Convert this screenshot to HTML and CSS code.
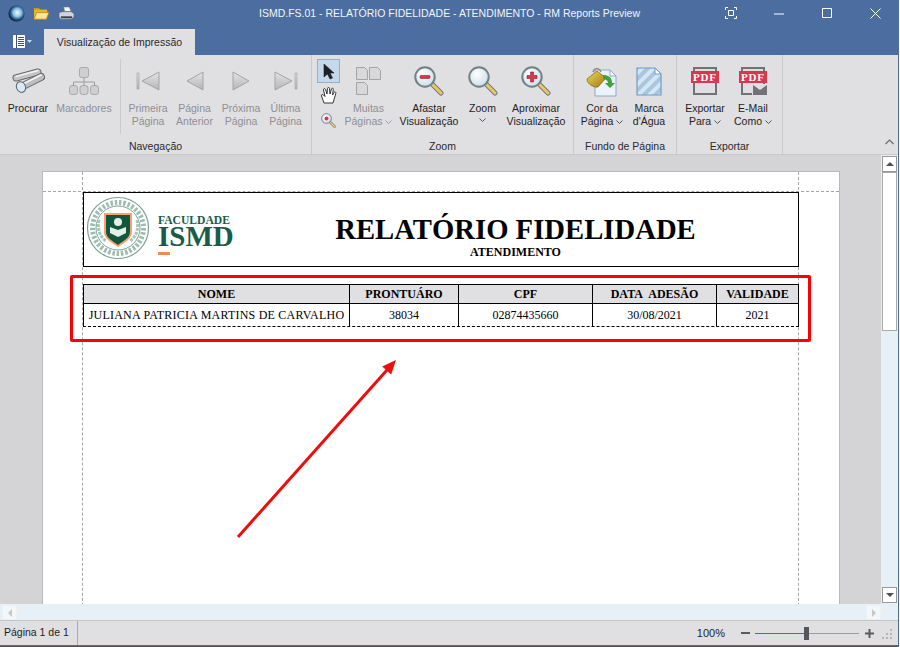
FILE: index.html
```html
<!DOCTYPE html>
<html lang="pt">
<head>
<meta charset="utf-8">
<title>RM Reports Preview</title>
<link rel="stylesheet" href="styles.css">
</head>
<body>
<svg class="defs" width="0" height="0" aria-hidden="true">
  <defs>
    <linearGradient id="navg" x1="0" y1="0" x2="0" y2="1"><stop offset="0" stop-color="#e4e4e6"/><stop offset="1" stop-color="#b4b4b8"/></linearGradient>
    <radialGradient id="lens" cx=".4" cy=".35" r=".8"><stop offset="0" stop-color="#ffffff"/><stop offset=".7" stop-color="#d5e4ea"/><stop offset="1" stop-color="#a9bfc8"/></radialGradient>
    <radialGradient id="globe" cx=".55" cy=".45" r=".55"><stop offset="0" stop-color="#f2f8fb"/><stop offset=".45" stop-color="#8ec6e4"/><stop offset=".8" stop-color="#1f4a78"/><stop offset="1" stop-color="#0d1f38"/></radialGradient>
    <linearGradient id="bucket" x1="0" y1="0" x2="1" y2="1"><stop offset="0" stop-color="#f2d65a"/><stop offset="1" stop-color="#9c7a10"/></linearGradient>
    <symbol id="mag" viewBox="0 0 30 30">
      <path d="M16 16l11 11" stroke="#77777a" stroke-width="5" stroke-linecap="round"/>
      <path d="M18 18l9 9" stroke="#e8c766" stroke-width="3" stroke-linecap="round"/>
      <circle cx="11" cy="11" r="9.700" fill="url(#lens)" stroke="#6f8288" stroke-width="2"/>
    </symbol>
    <symbol id="pages" viewBox="0 0 26 28">
      <path d="M.5.500h8l3 3v9H.5zM13.500.500h8l3 3v9h-11zM.5 15.500h8l3 3v9H.5z" fill="#d8d7da" stroke="#a3a3a6"/>
    </symbol>
    <symbol id="pdf" viewBox="0 0 28 28">
      <path d="M3 1h22v26H3z" fill="none" stroke="#727275" stroke-width="2"/>
      <path d="M0 4h28v12H0z" fill="#d9364f"/>
    </symbol>
  </defs>
</svg>
<div class="window">
  <header class="titlebar">
    <div class="qat">
      <svg width="17" height="17" viewBox="0 0 18 18"><circle cx="9" cy="9" r="8.500" fill="url(#globe)"/></svg>
      <svg width="17" height="15" viewBox="0 0 18 16"><path d="M1 2h5l2 2h7v3H1z" fill="#c99a1f"/><path d="M1 14V4h14v10z" fill="#e8b52f"/><path d="M1 14l3-7h13l-3 7z" fill="#fce690" stroke="#b6861a" stroke-width=".8"/></svg>
      <svg width="17" height="15" viewBox="0 0 18 16"><path d="M6 1h6l2 5H7z" fill="#f4f4f4" stroke="#6f7c8c" stroke-width=".7"/><path d="M1 7l4-1h9l3 2v4l-3 2H3l-2-2z" fill="#cfd5dc" stroke="#5d6570" stroke-width=".7"/><path d="M3 11h12v2H3z" fill="#39414c"/></svg>
    </div>
    <div class="wintitle">ISMD.FS.01 - RELATÓRIO FIDELIDADE - ATENDIMENTO - RM Reports Preview</div>
    <div class="winbtns">
      <svg width="12" height="12" viewBox="0 0 12 12" fill="none" stroke="#fff"><path d="M.5 3V.5H3M9 .5h2.500V3M11.500 9v2.500H9M3 11.500H.5V9"/><path d="M3.500 3.500h5v5h-5z"/></svg>
      <svg width="11" height="11" viewBox="0 0 11 11" fill="none" stroke="#fff"><path d="M0 6h10"/></svg>
      <svg width="11" height="11" viewBox="0 0 11 11" fill="none" stroke="#fff"><path d="M.5.500h9v9h-9z"/></svg>
      <svg width="11" height="11" viewBox="0 0 11 11" fill="none" stroke="#fff"><path d="M.5.500l10 10M10.500.500l-10 10"/></svg>
    </div>
  </header>
  <div class="tabrow">
    <button class="appmenu" type="button">
      <svg width="12" height="13" viewBox="0 0 12 13"><path d="M.5.500h11v12H.5z" fill="#fff" stroke="#fff"/><path d="M3.500 0v13" stroke="#44536a"/><path d="M5 2.500h6M5 4.500h6M5 6.500h6M5 8.500h6M5 10.500h6" stroke="#44536a"/></svg>
      <svg width="5" height="3" viewBox="0 0 5 3"><path d="M0 0h5L2.500 3z" fill="#cfd8e6"/></svg>
    </button>
    <div class="tab">Visualização de Impressão</div>
  </div>
  <section class="ribbon">
    <div class="group g-nav">
      <div class="tools">
        <div class="rb w-proc">
          <svg class="ico" width="34" height="26" viewBox="0 0 34 26"><g fill="none" stroke-linecap="round"><path d="M5 10L27 4" stroke="#68686b" stroke-width="7"/><path d="M5 10L27 4" stroke="#c4c4c6" stroke-width="5"/><path d="M5 8.500L27 2.500" stroke="#f2f2f2" stroke-width="1.400"/><path d="M10 19L30 9" stroke="#68686b" stroke-width="8"/><path d="M10 19L30 9" stroke="#bdbdc0" stroke-width="6"/><path d="M10 17L30 7" stroke="#f4f4f4" stroke-width="1.600"/></g><ellipse cx="10" cy="19" rx="4.500" ry="5.500" fill="#d8e9f7" stroke="#59626e" transform="rotate(-25 10 19)"/></svg>
          <span class="lbl">Procurar</span>
        </div>
        <div class="rb w-proc off">
          <svg class="ico" width="30" height="28" viewBox="0 0 30 28"><g fill="#cfced1" stroke="#a9a9ac"><rect x="10.500" y=".5" width="9" height="10" rx="2"/><rect x=".5" y="18.500" width="8" height="9" rx="2.500"/><rect x="11" y="18.500" width="8" height="9" rx="2.500"/><rect x="21.500" y="18.500" width="8" height="9" rx="2.500"/></g><path d="M15 11v7.500M4.500 18.500V15h21v3.500" fill="none" stroke="#9c9c9f"/></svg>
          <span class="lbl">Marcadores</span>
        </div>
      </div>
      <div class="vsep"></div>
      <div class="tools">
        <div class="rb w-a off">
          <svg class="ico" width="24" height="20" viewBox="0 0 24 20"><path d="M1 2h2v16H1z" fill="url(#navg)" stroke="#a5a5a8" stroke-width=".7"/><path d="M23 1v18L6 10z" fill="url(#navg)" stroke="#a5a5a8"/></svg>
          <span class="lbl">Primeira<br>Página</span>
        </div>
        <div class="rb w-b off">
          <svg class="ico" width="18" height="20" viewBox="0 0 18 20"><path d="M17 1v18L1 10z" fill="url(#navg)" stroke="#a5a5a8"/></svg>
          <span class="lbl">Página<br>Anterior</span>
        </div>
        <div class="rb w-a off">
          <svg class="ico" width="18" height="20" viewBox="0 0 18 20"><path d="M1 1v18l16-9z" fill="url(#navg)" stroke="#a5a5a8"/></svg>
          <span class="lbl">Próxima<br>Página</span>
        </div>
        <div class="rb w-c off">
          <svg class="ico" width="24" height="20" viewBox="0 0 24 20"><path d="M1 1v18l17-9z" fill="url(#navg)" stroke="#a5a5a8"/><path d="M21 2h2v16h-2z" fill="url(#navg)" stroke="#a5a5a8" stroke-width=".7"/></svg>
          <span class="lbl">Última<br>Página</span>
        </div>
      </div>
      <div class="gname">Navegação</div>
    </div>
    <div class="group g-zoom">
      <div class="tools">
        <div class="smalltools">
          <div class="st active"><svg width="14" height="17" viewBox="0 0 14 17"><path d="M2 1v13l3.500-3 2.500 5 2.500-1-2.500-5H12z" fill="#1d2024" stroke="#1d2024" stroke-width=".6"/></svg></div>
          <div class="st"><svg width="17" height="17" viewBox="0 0 17 17"><path d="M4 16L1.500 9c-.5-1.500 1-2 2-1L5 9.500 3.500 3c-.3-1.500 1.500-2 2-.5L7 7 7.500 1.500c.1-1.500 2-1.500 2 0L10 7l1.500-5c.4-1.300 2-1 1.800.5L12.500 8l1.500-2.500c.8-1.200 2.300-.5 1.800.8L13 16z" fill="#fff" stroke="#222" stroke-width=".9"/></svg></div>
          <div class="st"><svg width="15" height="15" viewBox="0 0 30 30"><use href="#mag"/><circle cx="11" cy="11" r="4" fill="#d9364f"/></svg></div>
        </div>
        <div class="rb w-mp off">
          <svg class="ico" width="26" height="28" viewBox="0 0 26 28"><use href="#pages"/></svg>
          <span class="lbl">Muitas<br>Páginas<svg class="chev" width="7" height="4" viewBox="0 0 7 4"><path d="M.5.500l3 3 3-3" fill="none" stroke="#9d9da0"/></svg></span>
        </div>
        <div class="rb w-af">
          <svg class="ico" width="30" height="30" viewBox="0 0 30 30"><use href="#mag"/><rect x="6" y="9.500" width="10" height="3" rx="1" fill="#d9364f" stroke="#8d2030" stroke-width=".6"/></svg>
          <span class="lbl">Afastar<br>Visualização</span>
        </div>
        <div class="rb w-z">
          <svg class="ico" width="30" height="30" viewBox="0 0 30 30"><use href="#mag"/></svg>
          <span class="lbl">Zoom<br><svg class="chev solo" width="7" height="4" viewBox="0 0 7 4"><path d="M.5.500l3 3 3-3" fill="none" stroke="#55555a"/></svg></span>
        </div>
        <div class="rb w-ap">
          <svg class="ico" width="30" height="30" viewBox="0 0 30 30"><use href="#mag"/><path d="M9.500 6h3v3.500H16v3h-3.500V16h-3v-3.500H6v-3h3.500z" fill="#d9364f" stroke="#8d2030" stroke-width=".6"/></svg>
          <span class="lbl">Aproximar<br>Visualização</span>
        </div>
      </div>
      <div class="gname">Zoom</div>
    </div>
    <div class="group g-bg">
      <div class="tools">
        <div class="rb w-cor">
          <svg class="ico" width="32" height="32" viewBox="0 0 32 32"><path d="M9 5h15l6 6v20H9z" fill="#e9f3f9" stroke="#8fa9c4"/><path d="M24 5v6h6z" fill="#fff" stroke="#8fa9c4"/><path d="M1 14L11 6l9 7-8 9c-4 1-11-3-11-8z" fill="url(#bucket)" stroke="#7d6208" stroke-width=".7"/><path d="M7 7c1-4 6-5 8 0" fill="none" stroke="#8a8a8a" stroke-width="1.400"/><path d="M17 10c5 0 9 2 9 8h3l-5 5-5-5h3c0-3-3-4-5-4z" fill="#3fa33a"/></svg>
          <span class="lbl">Cor da<br>Página<svg class="chev" width="7" height="4" viewBox="0 0 7 4"><path d="M.5.500l3 3 3-3" fill="none" stroke="#55555a"/></svg></span>
        </div>
        <div class="rb w-marca">
          <svg class="ico" width="26" height="30" viewBox="0 0 26 30"><defs><pattern id="wm" width="8" height="8" patternUnits="userSpaceOnUse" patternTransform="rotate(45)"><rect width="8" height="8" fill="#d5e6f3"/><rect width="4" height="8" fill="#a9c6de"/></pattern></defs><path d="M1 2h18l6 6v21H1z" fill="url(#wm)" stroke="#6f9cc9" stroke-width="1.200"/><path d="M19 2v6h6z" fill="#fff" stroke="#6f9cc9"/></svg>
          <span class="lbl">Marca<br>d'Água</span>
        </div>
      </div>
      <div class="gname">Fundo de Página</div>
    </div>
    <div class="group g-exp">
      <div class="tools">
        <div class="rb w-ex">
          <svg class="ico" width="28" height="28" viewBox="0 0 28 28"><use href="#pdf"/><text class="pdf" x="14" y="14" text-anchor="middle">PDF</text></svg>
          <span class="lbl">Exportar<br>Para<svg class="chev" width="7" height="4" viewBox="0 0 7 4"><path d="M.5.500l3 3 3-3" fill="none" stroke="#55555a"/></svg></span>
        </div>
        <div class="rb w-em">
          <svg class="ico" width="28" height="28" viewBox="0 0 28 28"><use href="#pdf"/><text class="pdf" x="14" y="14" text-anchor="middle">PDF</text><path d="M13 17h15v11H13z" fill="#e0dfe2"/><path d="M14 18h14v10H14z" fill="#737377"/><path d="M14 18l7 5 7-5z" fill="#e0dfe2"/></svg>
          <span class="lbl">E-Mail<br>Como<svg class="chev" width="7" height="4" viewBox="0 0 7 4"><path d="M.5.500l3 3 3-3" fill="none" stroke="#55555a"/></svg></span>
        </div>
      </div>
      <div class="gname">Exportar</div>
    </div>
    <svg class="collapse" width="9" height="6" viewBox="0 0 9 6"><path d="M.5 5L4.500 1l4 4" fill="none" stroke="#6a6a6e" stroke-width="1.200"/></svg>
  </section>
  <div class="viewer">
    <div class="canvas">
      <div class="paper">
        <div class="guide-h"></div>
        <div class="guide-v gv-l"></div>
        <div class="guide-v gv-r"></div>
        <div class="report">
          <div class="rephead">
            <div class="logo">
              <svg width="64" height="64" viewBox="0 0 64 64">
                <circle cx="32" cy="32" r="30.500" fill="#fff" stroke="#7aa394" stroke-width="1.200"/>
                <circle cx="32" cy="32" r="25.500" fill="none" stroke="#9dbcaf" stroke-width="5" stroke-dasharray="2.500 1.800"/>
                <circle cx="32" cy="32" r="22" fill="#fff" stroke="#7aa394"/>
                <path d="M13 24c-2 9 1 17 7 21M51 24c2 9-1 17-7 21" fill="none" stroke="#a9c4b9" stroke-width="3" stroke-dasharray="3 1"/>
                <path d="M18 17h28v19c0 7-8 11-14 15-6-4-14-8-14-15z" fill="#f3a56b"/>
                <path d="M20 19h24v17c0 6-7 9-12 13-5-4-12-7-12-13z" fill="#13573f"/>
                <path d="M24 31l8 3 8-3v6l-8 4-8-4z" fill="#e4efe9"/>
                <circle cx="32" cy="26" r="4" fill="#e4efe9"/>
              </svg>
              <div class="wordmark">
                <div class="wm-small">FACULDADE</div>
                <div class="wm-big">ISMD</div>
                <div class="wm-bar"></div>
              </div>
            </div>
            <div class="reptitle">
              <div class="t1">RELATÓRIO FIDELIDADE</div>
              <div class="t2">ATENDIMENTO</div>
            </div>
          </div>
          <div class="reptable">
            <div class="rr hd">
              <div class="c c1">NOME</div><div class="c c2">PRONTUÁRO</div><div class="c c3">CPF</div><div class="c c4">DATA&nbsp; ADESÃO</div><div class="c c5">VALIDADE</div>
            </div>
            <div class="rr bd">
              <div class="c c1 name">JULIANA PATRICIA MARTINS DE CARVALHO</div><div class="c c2">38034</div><div class="c c3">02874435660</div><div class="c c4">30/08/2021</div><div class="c c5">2021</div>
            </div>
          </div>
        </div>
      </div>
      <div class="redbox"></div>
      <svg class="arrow" width="170" height="190" viewBox="0 0 170 190"><path d="M3 182L152 15" stroke="#ee0d0d" stroke-width="3" fill="none"/><path d="M161 5l-4.800 14.400-9-8z" fill="#ee0d0d"/></svg>
    </div>
    <div class="vscroll">
      <div class="sbtn"><svg width="8" height="4" viewBox="0 0 8 4"><path d="M4 0l4 4H0z" fill="#4f4f52"/></svg></div>
      <div class="thumb"></div>
      <div class="strack"></div>
      <div class="sbtn"><svg width="8" height="4" viewBox="0 0 8 4"><path d="M0 0h8L4 4z" fill="#4f4f52"/></svg></div>
    </div>
  </div>
  <div class="hscroll">
    <div class="hbtn"><svg width="4" height="8" viewBox="0 0 4 8"><path d="M4 0v8L0 4z" fill="#c4c6c8"/></svg></div>
    <div class="hbtn"><svg width="4" height="8" viewBox="0 0 4 8"><path d="M0 0v8l4-4z" fill="#c4c6c8"/></svg></div>
  </div>
  <footer class="status">
    <div class="pageinfo">Página 1 de 1</div>
    <div class="zoomarea">
      <span class="pct">100%</span>
      <svg width="9" height="3" viewBox="0 0 9 3"><path d="M0 0h9v2H0z" fill="#5b5b5e"/></svg>
      <div class="slider"><div class="fill"></div><div class="knob"></div></div>
      <svg width="9" height="9" viewBox="0 0 9 9"><path d="M3.500 0h2v3.500H9v2H5.500V9h-2V5.500H0v-2h3.500z" fill="#5b5b5e"/></svg>
      <svg class="grip" width="11" height="11" viewBox="0 0 11 11"><path d="M8 0h2v2H8zM4 4h2v2H4zM8 4h2v2H8zM0 8h2v2H0zM4 8h2v2H4zM8 8h2v2H8z" fill="#b5b5b8"/></svg>
    </div>
  </footer>
</div>
</body>
</html>
```
FILE: styles.css
```css
* { box-sizing: border-box; }
html, body { margin: 0; padding: 0; }
body { width: 900px; height: 647px; overflow: hidden; background: #fff; font-family: "Liberation Sans", "Noto Sans", sans-serif; font-size: 10.500px; color: #1e1e1e; }
.defs { position: absolute; }
.window { width: 899px; height: 647px; display: flex; flex-direction: column; border-right: 1px solid #4c6d9f; border-bottom: 1px solid #555; }

.titlebar { height: 28px; padding-bottom: 2px; background: #4c6d9f; display: flex; align-items: center; color: #fff; flex: none; }
.qat { display: flex; align-items: center; gap: 8px; width: 78px; padding-left: 8px; flex: none; }
.wintitle { width: 633px; padding-left: 181px; white-space: nowrap; color: #f2f5f9; flex: none; }
.winbtns { display: flex; align-items: center; gap: 37px; padding-left: 14px; }

.tabrow { height: 27px; background: #4c6d9f; display: flex; flex: none; }
.appmenu { width: 44px; height: 27px; padding: 0 0 0 13px; background: none; border: 0; display: flex; align-items: center; gap: 2px; }
.tab { width: 151px; height: 26px; margin-top: 1px; background: #e0dfe2; text-align: center; line-height: 26px; color: #2a2a2a; }

.ribbon { height: 100px; background: #e0dfe2; display: flex; border-bottom: 1px solid #c9c8cb; position: relative; flex: none; }
.group { position: relative; border-right: 1px solid #c9c8cb; display: flex; flex: none; height: 99px; }
.g-nav { width: 312px; }
.g-zoom { width: 262px; }
.g-bg { width: 103px; padding-left: 1px; }
.g-exp { width: 106px; }
.tools { display: flex; height: 80px; padding-top: 3px; }
.vsep { width: 1px; height: 75px; margin: 4px 4px 0 8px; background: #cbcacd; flex: none; }
.gname { position: absolute; left: 0; right: 0; bottom: 1px; text-align: center; line-height: 14px; color: #2a2a2a; }
.rb { display: flex; flex-direction: column; align-items: center; flex: none; text-align: center; line-height: 13px; color: #1e1e1e; height: 77px; }
.rb .ico { height: 32px; margin-top: 7px; margin-bottom: 5px; flex: none; }
.lbl { display: block; white-space: nowrap; }
.rb.off { color: #8f8f92; }
.chev { margin-left: 3px; vertical-align: 1px; }
.chev.solo { margin: 0; vertical-align: 3px; }
.w-proc { width: 56px; }
.w-a { width: 46px; }
.w-b { width: 47px; }
.w-c { width: 43px; }
.smalltools { width: 34px; padding-left: 5px; padding-top: 1px; display: flex; flex-direction: column; flex: none; }
.st { width: 23px; height: 24px; display: flex; align-items: center; justify-content: center; }
.st.active { background: #c6d9ea; border: 1px solid #8fb0cf; }
.st:nth-child(3) { margin-top: 1px; }
.w-mp { width: 45px; }
.w-af { width: 76px; }
.w-z { width: 31px; }
.w-ap { width: 76px; }
.w-cor { width: 54px; }
.w-marca { width: 40px; }
.w-ex { width: 56px; }
.w-em { width: 40px; }
.pdf { font-family: "Liberation Serif", serif; font-size: 11px; font-weight: 700; fill: #fff; letter-spacing: .8px; }
.collapse { position: absolute; left: 885px; top: 84px; }

.viewer { flex: 1; min-height: 0; display: flex; background: #d4d3d6; }
.canvas { flex: 1; min-width: 0; position: relative; overflow: hidden; padding: 16px 0 0 42px; }
.paper { position: relative; width: 798px; height: 500px; background: #fff; border: 1px solid #b9b8bb; border-bottom: 0; padding: 20px 0 0 40px; }
.guide-h { position: absolute; left: 0; right: 0; top: 19px; border-top: 1px dashed #a5a5a5; }
.guide-v { position: absolute; top: 0; bottom: 0; border-left: 1px dashed #a5a5a5; }
.gv-l { left: 39px; }
.gv-r { left: 755px; }
.report { width: 716px; position: relative; font-family: "Liberation Serif", serif; color: #000; }
.rephead { height: 75px; border: 1px solid #000; display: flex; position: relative; background: #fff; }
.logo { width: 149px; flex: none; display: flex; align-items: flex-start; gap: 8px; padding: 3px 0 0 2px; }
.logo svg { flex: none; }
.wordmark { color: #1a5c47; font-weight: 700; margin-top: 18px; }
.wm-small { font-size: 11.600px; line-height: 13px; white-space: nowrap; }
.wm-big { font-size: 29px; line-height: 25px; margin-top: -3px; }
.wm-bar { width: 12px; height: 3px; margin-top: 3px; background: #f08c4b; }
.reptitle { flex: 1; text-align: center; font-weight: 700; padding-top: 21px; }
.t1 { font-size: 28.700px; line-height: 30px; white-space: nowrap; }
.t2 { font-size: 12px; line-height: 13px; margin-top: 2px; }
.reptable { margin-top: 17px; }
.rr { display: flex; }
.rr.hd { height: 20px; border: 1px solid #000; background: #e0dfe2; font-weight: 700; font-size: 12px; line-height: 18px; }
.rr.bd { height: 23px; border-left: 1px solid #000; border-right: 1px solid #000; border-bottom: 1px dashed #000; font-size: 12px; line-height: 22px; }
.c { text-align: center; white-space: nowrap; flex: none; border-right: 1px solid #000; }
.c1 { width: 266px; }
.c2 { width: 109px; }
.c3 { width: 134px; }
.c4 { width: 124px; }
.c5 { width: 81px; border-right: 0; }
.name { letter-spacing: .22px; }

.redbox { position: absolute; left: 70px; top: 120px; width: 741px; height: 67px; border: 3px solid #fe0000; border-radius: 2px; }
.arrow { position: absolute; left: 235px; top: 200px; }

.vscroll { width: 17px; flex: none; background: #e8f0f7; padding: 1px; display: flex; flex-direction: column; }
.sbtn { height: 16px; border: 1px solid #99999c; background: #fff; display: flex; align-items: center; justify-content: center; flex: none; }
.thumb { height: 159px; background: #fff; border: 1px solid #a9a9ac; flex: none; }
.strack { flex: 1; }

.hscroll { height: 17px; background: #e8f0f7; display: flex; justify-content: space-between; padding: 1px 17px 0 2px; border-bottom: 1px solid #c5c5c8; flex: none; }
.hbtn { width: 15px; height: 15px; background: #f4f7fa; border: 1px solid #eef1f4; display: flex; align-items: center; justify-content: center; }

.status { height: 25px; background: #e0dfe2; display: flex; justify-content: space-between; align-items: center; flex: none; border-bottom: 1px solid #4c6d9f; }
.pageinfo { width: 78px; height: 100%; border-right: 1px solid #a9a9ac; padding-left: 4px; line-height: 23px; }
.zoomarea { display: flex; align-items: center; }
.pct { margin-right: 16px; font-size: 11px; }
.slider { position: relative; width: 104px; height: 1px; margin: 0 6px 0 5px; background: #9b9b9e; }
.fill { width: 51px; height: 1px; background: #4c6d9f; }
.knob { position: absolute; left: 49px; top: -6px; width: 5px; height: 13px; background: #55555a; }
.grip { margin: 3px 5px 0 8px; }
```
